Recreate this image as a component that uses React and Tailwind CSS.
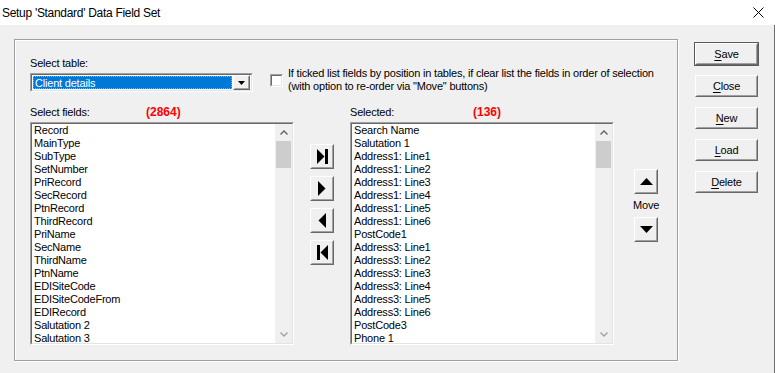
import React from "react";

const fields = [
  "Record",
  "MainType",
  "SubType",
  "SetNumber",
  "PriRecord",
  "SecRecord",
  "PtnRecord",
  "ThirdRecord",
  "PriName",
  "SecName",
  "ThirdName",
  "PtnName",
  "EDISiteCode",
  "EDISiteCodeFrom",
  "EDIRecord",
  "Salutation 2",
  "Salutation 3",
];

const selected = [
  "Search Name",
  "Salutation 1",
  "Address1: Line1",
  "Address1: Line2",
  "Address1: Line3",
  "Address1: Line4",
  "Address1: Line5",
  "Address1: Line6",
  "PostCode1",
  "Address3: Line1",
  "Address3: Line2",
  "Address3: Line3",
  "Address3: Line4",
  "Address3: Line5",
  "Address3: Line6",
  "PostCode3",
  "Phone 1",
];

// classic 3D edges
const Sunken = ({ className = "", children }) => (
  <div
    className={`border border-t-[#a0a0a0] border-l-[#a0a0a0] border-b-white border-r-white ${className}`}
  >
    <div className="h-full w-full border border-t-[#696969] border-l-[#696969] border-b-[#e3e3e3] border-r-[#e3e3e3] bg-white">
      {children}
    </div>
  </div>
);

const Raised = ({ className = "", children }) => (
  <div
    className={`border border-t-white border-l-white border-b-[#696969] border-r-[#696969] ${className}`}
  >
    <div className="flex h-full w-full items-center justify-center border border-t-[#f0f0f0] border-l-[#f0f0f0] border-b-[#a0a0a0] border-r-[#a0a0a0] bg-[#f0f0f0]">
      {children}
    </div>
  </div>
);

const ListBox = ({ items }) => (
  <Sunken className="h-[223px] w-[264px]">
    <div className="flex h-full">
      <div className="flex-1 overflow-hidden pl-[2px]">
        {items.map((item) => (
          <div key={item} className="h-[13px] whitespace-nowrap leading-[13px]">
            {item}
          </div>
        ))}
      </div>
      <div className="flex w-[17px] flex-col bg-[#f0f0f0]">
        <div className="flex h-[17px] items-center justify-center">
          <svg width="8" height="5" viewBox="0 0 8 5">
            <polyline points="0.5,4.5 4,1 7.5,4.5" fill="none" stroke="#606060" strokeWidth="1.3" />
          </svg>
        </div>
        <div className="mx-[1px] h-[27px] bg-[#cdcdcd]" />
        <div className="flex-1" />
        <div className="flex h-[17px] items-center justify-center">
          <svg width="8" height="5" viewBox="0 0 8 5">
            <polyline points="0.5,0.5 4,4 7.5,0.5" fill="none" stroke="#a0a0a0" strokeWidth="1.3" />
          </svg>
        </div>
      </div>
    </div>
  </Sunken>
);

const ArrowButton = ({ children }) => <Raised className="h-[25px] w-[24px]">{children}</Raised>;

const CmdButton = ({ letter, rest, isDefault }) => (
  <div className={isDefault ? "border border-[#5a5a5a]" : "border border-transparent"}>
    <Raised className="h-[22px] w-[63px]">
      <span>
        <span className="underline underline-offset-[2px]">{letter}</span>
        {rest}
      </span>
    </Raised>
  </div>
);

export default function App() {
  return (
    <div className="flex h-[373px] w-[775px] flex-col bg-[#f0f0f0] font-['Liberation_Sans',Arial,sans-serif] text-[11px] tracking-[-0.2px] text-black">
      <div className="flex h-[25px] items-center justify-between bg-white pl-[2px] pr-[11px]">
        <span className="text-[12px] tracking-[-0.3px]">Setup 'Standard' Data Field Set</span>
        <svg width="11" height="11" viewBox="0 0 11 11">
          <path d="M0.5 0.5 L10.5 10.5 M10.5 0.5 L0.5 10.5" stroke="#000" strokeWidth="1" />
        </svg>
      </div>

      <div className="flex flex-1 border-r border-[#6d6d6d] pl-[14px] pt-[14px]">
        <div className="h-[322px] w-[664px] border border-[#a0a0a0] pl-[15px] pt-[17px] shadow-[1px_1px_0_#fff,inset_1px_1px_0_#fff]">
          <div className="flex h-[35px] items-start">
            <div className="w-[223px]">
              <div className="h-[13px] leading-[13px]">Select table:</div>
              <Sunken className="mt-[3px] h-[19px] w-[223px]">
                <div className="flex h-full p-[1px]">
                  <div className="flex-1 border border-dotted border-[#d9a050] bg-[#0078d7] pl-[1px] leading-[12px] text-white">
                    Client details
                  </div>
                  <Raised className="ml-[1px] h-[15px] w-[17px] -mt-[1px]">
                    <svg width="7" height="4" viewBox="0 0 7 4">
                      <polygon points="0,0 7,0 3.5,4" fill="#000" />
                    </svg>
                  </Raised>
                </div>
              </Sunken>
            </div>
            <div className="ml-[17px] mt-[10px] flex">
              <Sunken className="mt-[7px] h-[13px] w-[13px]" />
              <div className="ml-[5px] leading-[13px]">
                <div>If ticked list fields by position in tables, if clear list the fields in order of selection</div>
                <div>(with option to re-order via "Move" buttons)</div>
              </div>
            </div>
          </div>

          <div className="mt-[14px] flex h-[13px] leading-[13px]">
            <div className="w-[116px]">Select fields:</div>
            <div className="w-[204px] text-[12px] font-bold tracking-normal text-[#ff0000]">(2864)</div>
            <div className="w-[123px]">Selected:</div>
            <div className="text-[12px] font-bold tracking-normal text-[#ff0000]">(136)</div>
          </div>

          <div className="mt-[3px] flex items-start">
            <ListBox items={fields} />
            <div className="ml-[16px] mt-[22px] flex flex-col gap-[7px]">
              <ArrowButton>
                <svg width="11" height="15" viewBox="0 0 11 15">
                  <polygon points="0,0 7.5,7.5 0,15" fill="#000" />
                  <rect x="8" y="0" width="3" height="15" fill="#000" />
                </svg>
              </ArrowButton>
              <ArrowButton>
                <svg width="8" height="15" viewBox="0 0 8 15">
                  <polygon points="0,0 7.5,7.5 0,15" fill="#000" />
                </svg>
              </ArrowButton>
              <ArrowButton>
                <svg width="8" height="15" viewBox="0 0 8 15">
                  <polygon points="8,0 0.5,7.5 8,15" fill="#000" />
                </svg>
              </ArrowButton>
              <ArrowButton>
                <svg width="11" height="15" viewBox="0 0 11 15">
                  <rect x="0" y="0" width="3" height="15" fill="#000" />
                  <polygon points="11,0 3.5,7.5 11,15" fill="#000" />
                </svg>
              </ArrowButton>
            </div>
            <div className="ml-[16px]">
              <ListBox items={selected} />
            </div>
            <div className="ml-[19px] mt-[47px] flex flex-col items-center">
              <ArrowButton>
                <svg width="13" height="7" viewBox="0 0 13 7">
                  <polygon points="0,7 6.5,0 13,7" fill="#000" />
                </svg>
              </ArrowButton>
              <div className="mt-[5px] h-[13px] leading-[13px]">Move</div>
              <div className="mt-[5px]">
                <ArrowButton>
                  <svg width="13" height="7" viewBox="0 0 13 7">
                    <polygon points="0,0 13,0 6.5,7" fill="#000" />
                  </svg>
                </ArrowButton>
              </div>
            </div>
          </div>
        </div>

        <div className="ml-[16px] mt-[3px] flex flex-col gap-[8px]">
          <CmdButton letter="S" rest="ave" isDefault />
          <CmdButton letter="C" rest="lose" />
          <CmdButton letter="N" rest="ew" />
          <CmdButton letter="L" rest="oad" />
          <CmdButton letter="D" rest="elete" />
        </div>
      </div>
    </div>
  );
}
